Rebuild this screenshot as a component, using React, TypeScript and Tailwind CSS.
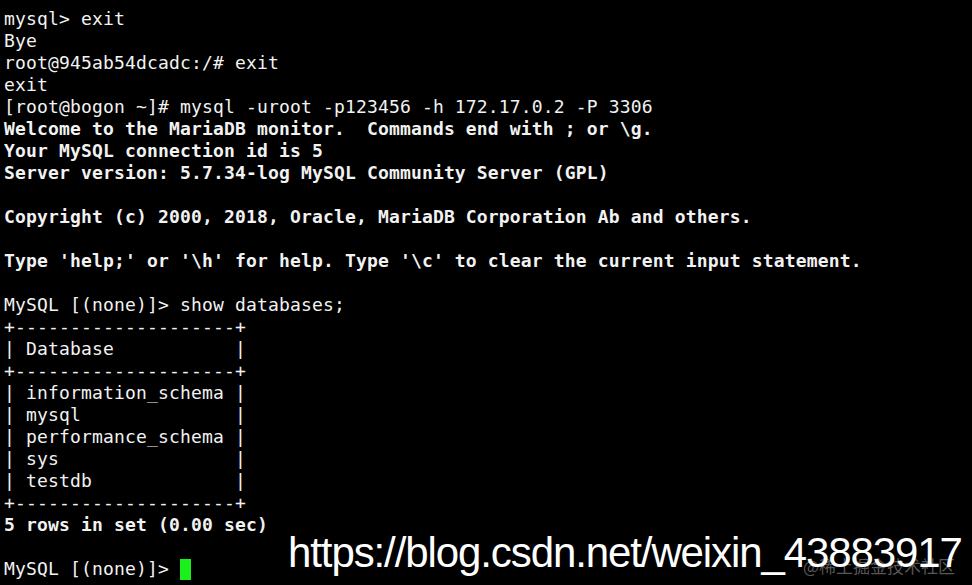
const lines: { text: string; bold?: boolean }[] = [
  { text: 'mysql> exit' },
  { text: 'Bye' },
  { text: 'root@945ab54dcadc:/# exit' },
  { text: 'exit' },
  { text: '[root@bogon ~]# mysql -uroot -p123456 -h 172.17.0.2 -P 3306' },
  { text: 'Welcome to the MariaDB monitor.  Commands end with ; or \\g.', bold: true },
  { text: 'Your MySQL connection id is 5', bold: true },
  { text: 'Server version: 5.7.34-log MySQL Community Server (GPL)', bold: true },
  { text: '' },
  { text: 'Copyright (c) 2000, 2018, Oracle, MariaDB Corporation Ab and others.', bold: true },
  { text: '' },
  { text: "Type 'help;' or '\\h' for help. Type '\\c' to clear the current input statement.", bold: true },
  { text: '' },
  { text: 'MySQL [(none)]> show databases;' },
  { text: '+--------------------+' },
  { text: '| Database           |' },
  { text: '+--------------------+' },
  { text: '| information_schema |' },
  { text: '| mysql              |' },
  { text: '| performance_schema |' },
  { text: '| sys                |' },
  { text: '| testdb             |' },
  { text: '+--------------------+' },
  { text: '5 rows in set (0.00 sec)', bold: true },
  { text: '' },
];

export default function App() {
  return (
    <div className="relative w-[972px] h-[585px] overflow-hidden bg-black">
      <div className="pt-2 pl-1 font-['DejaVu_Sans_Mono',monospace] text-[18px] leading-[22px] tracking-[0.16px] text-[#f2f2f2] whitespace-pre">
        {lines.map((line, i) => (
          <div key={i} className={line.bold ? 'font-bold h-[22px]' : 'h-[22px]'}>
            {line.text}
          </div>
        ))}
        <div className="flex h-[22px] items-center">
          <span>MySQL [(none)]&gt; </span>
          <span className="inline-block w-[11px] h-[21px] bg-[#1cf01c]" />
        </div>
      </div>

      {/* watermarks */}
      <div className="absolute left-[288px] top-[532px] font-['Liberation_Sans',Arial,sans-serif] text-[42px] leading-[42px] tracking-[-1.1px] text-white whitespace-nowrap">
        https://blog.csdn.net/weixin_43883917
      </div>
      <div className="absolute left-[803px] top-[556px] font-['Noto_Sans_CJK_SC',sans-serif] text-[17px] leading-[20px] text-white/35 whitespace-nowrap">
        @稀土掘金技术社区
      </div>
    </div>
  );
}
